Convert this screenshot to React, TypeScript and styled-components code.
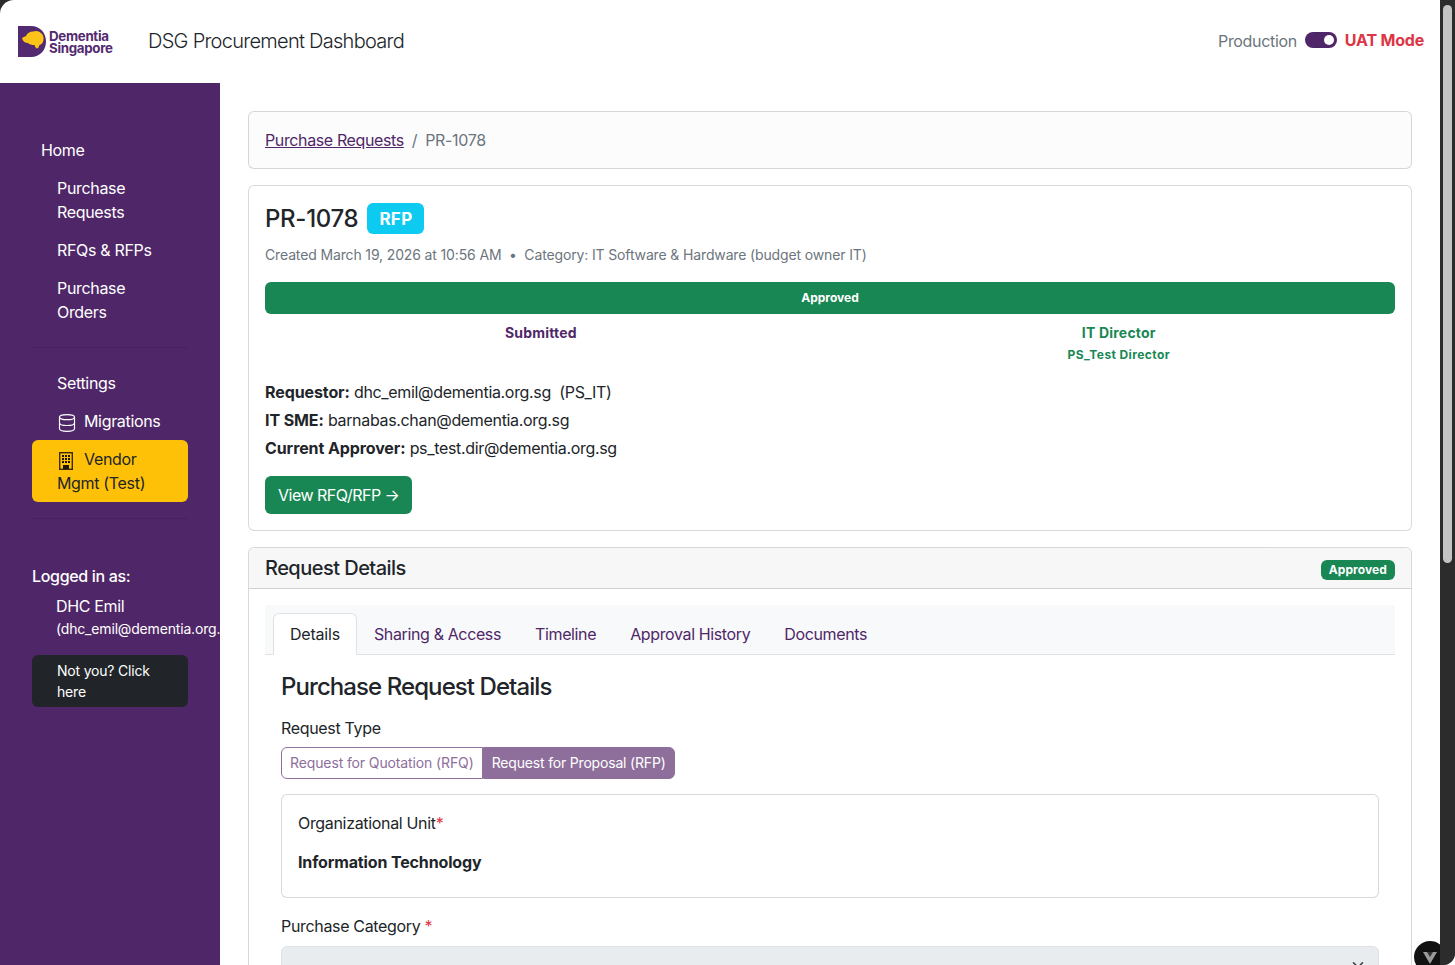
import { createGlobalStyle } from "styled-components";
import styled from "styled-components";
import { Database } from "lucide-react";

const GlobalStyle = createGlobalStyle`
  html, body {
    margin: 0;
    height: 100%;
    overflow: hidden;
    background: #fff;
  }
  * {
    box-sizing: border-box;
  }
  body {
    font-family: Inter, "Liberation Sans", sans-serif;
    font-size: 16px;
    line-height: 24px;
    letter-spacing: -0.33px;
    color: #212529;
  }
`;

const Window = styled.div`
  position: relative;
  width: 1455px;
  height: 965px;
  display: flex;
  background: #fff;
  overflow: hidden;
`;

const Page = styled.div`
  width: 1440px;
  height: 965px;
  display: flex;
  flex-direction: column;
  background: #fff;
  overflow: hidden;
  border-top-left-radius: 14px;
`;

const Corner = styled.div`
  width: 1455px;
  height: 965px;
  display: flex;
  background: #2b2b2b;
  border-bottom-right-radius: 12px;
`;

const Track = styled.div`
  width: 15px;
  height: 965px;
  padding: 5px 3px 0 3px;
  background: #2c2c2c;
  border-bottom-right-radius: 12px;
`;

const Thumb = styled.div`
  width: 9px;
  height: 558px;
  border-radius: 5px;
  background: #c4c4c4;
`;

const Header = styled.header`
  height: 83px;
  flex: none;
  display: flex;
  align-items: center;
  padding: 0 16px 0 18px;
`;

const Logo = styled.div`
  display: flex;
  align-items: center;
  gap: 3px;
  width: 130px;
`;

const LogoText = styled.div`
  color: #53296f;
  font-size: 13.3px;
  line-height: 12px;
  font-weight: 700;
  letter-spacing: -0.3px;
  margin-top: 1px;
`;

const Title = styled.div`
  font-size: 20px;
  font-weight: 300;
  letter-spacing: -0.72px;
  flex: 1;
  margin-top: -1px;
`;

const ModeSwitch = styled.div`
  display: flex;
  align-items: center;
  gap: 8px;
  margin-top: -2px;
`;

const ModeLabel = styled.span`
  color: #6c757d;
`;

const UatLabel = styled.span`
  color: #dc3545;
  font-weight: 700;
  letter-spacing: -0.2px;
  margin-top: -1px;
`;

const Toggle = styled.div`
  width: 32px;
  height: 16px;
  margin-top: -1px;
  border-radius: 8px;
  background: #4f2768;
  display: flex;
  justify-content: flex-end;
  align-items: center;
  padding-right: 3px;
`;

const Knob = styled.div`
  width: 10px;
  height: 10px;
  border-radius: 50%;
  background: #fff;
`;

const Body = styled.div`
  flex: 1;
  display: flex;
  min-height: 0;
`;

const Sidebar = styled.aside`
  width: 220px;
  flex: none;
  background: #4f2768;
  color: #fff;
  padding: 48px 0 0 32px;
  overflow: hidden;
`;

const NavList = styled.div`
  width: 156px;
`;

const NavItem = styled.div<{ $top?: boolean }>`
  padding: 7px 25px;
  padding-left: ${({ $top }) => ($top ? "9px" : "25px")};
`;

const ActiveNavItem = styled(NavItem)`
  background: #ffc107;
  color: #212529;
  border-radius: 6px;
`;

const NavIcon = styled.span`
  display: inline-flex;
  width: 20px;
  height: 17px;
  align-items: center;
  justify-content: center;
  vertical-align: middle;
  margin-right: 7px;

  svg {
    flex: none;
  }
`;

const BuildingIcon = styled(NavIcon)`
  width: 18px;
  margin-right: 9px;
`;

const NavDivider = styled.hr`
  border: 0;
  border-top: 1px solid rgba(0, 0, 0, 0.1);
  margin: 16px 0;
`;

const LoggedLabel = styled.div`
  margin-top: 45px;
  font-weight: 500;
`;

const UserName = styled.div`
  margin: 6px 0 0 24px;
`;

const UserEmail = styled.div`
  margin: 0 0 0 24px;
  font-size: 14px;
  letter-spacing: -0.17px;
  white-space: nowrap;
  line-height: 22px;
`;

const NotYou = styled.div`
  width: 156px;
  margin-top: 15px;
  padding: 5px 25px;
  background: #212529;
  border-radius: 6px;
  font-size: 14px;
  letter-spacing: -0.2px;
  line-height: 21px;
`;

const Main = styled.main`
  flex: 1;
  padding: 28px 28px 0 28px;
  display: flex;
  flex-direction: column;
  gap: 16px;
  overflow: hidden;
`;

const Card = styled.section`
  flex: none;
  border: 1px solid rgba(0, 0, 0, 0.15);
  border-radius: 6px;
  background: #fff;
`;

const Breadcrumb = styled(Card)`
  height: 58px;
  padding: 16px;
  display: flex;
  gap: 8px;
  background: #fcfcfc;
  color: #6c757d;
`;

const CrumbLink = styled.a`
  color: #4f2768;
  letter-spacing: -0.38px;
  text-decoration: underline;
`;

const SummaryCard = styled(Card)`
  height: 346px;
  padding: 16px;
`;

const TitleRow = styled.div`
  display: flex;
  align-items: center;
  gap: 9px;
  height: 33px;
`;

const PrNumber = styled.h1`
  margin: 0;
  font-size: 24px;
  line-height: 30px;
  font-weight: 500;
  letter-spacing: -0.3px;
`;

const TypeBadge = styled.span`
  width: 57px;
  height: 31px;
  background: #0dcaf0;
  color: #fff;
  border-radius: 6px;
  font-weight: 700;
  font-size: 17px;
  letter-spacing: 0.3px;
  display: flex;
  align-items: center;
  justify-content: center;
`;

const Meta = styled.div`
  margin-top: 8px;
  font-size: 14px;
  letter-spacing: -0.14px;
  line-height: 24px;
  color: #6c757d;
`;

const ProgressBar = styled.div`
  margin-top: 15px;
  height: 32px;
  background: #198754;
  border-radius: 6px;
  color: #fff;
  font-size: 12px;
  font-weight: 700;
  letter-spacing: 0;
  line-height: 32px;
  text-align: center;
`;

const Steps = styled.div`
  display: flex;
  justify-content: space-between;
  padding: 8px 225px 0 240px;
`;

const Step = styled.div<{ $done?: boolean }>`
  text-align: center;
  font-size: 14px;
  letter-spacing: 0.2px;
  line-height: 22px;
  font-weight: 700;
  color: ${({ $done }) => ($done ? "#198754" : "#4f2768")};
`;

const StepSub = styled.div`
  font-size: 12px;
  letter-spacing: 0.4px;
  line-height: 22px;
`;

const InfoList = styled.div`
  margin-top: 12px;
`;

const InfoLine = styled.div`
  line-height: 28px;

  b {
    letter-spacing: -0.1px;
  }
`;

const ViewButton = styled.div`
  display: inline-block;
  margin-top: 14px;
  padding: 7px 13px;
  height: 38px;
  border-radius: 6px;
  background: #198754;
  color: #fff;
  letter-spacing: -0.5px;
`;

const DetailsCard = styled(Card)`
  flex: 1;
  border-bottom: 0;
  border-radius: 6px 6px 0 0;
`;

const DetailsHeader = styled.div`
  height: 41px;
  display: flex;
  align-items: center;
  justify-content: space-between;
  padding: 0 16px;
  background: #f7f7f7;
  border-bottom: 1px solid rgba(0, 0, 0, 0.15);
  border-radius: 6px 6px 0 0;
`;

const DetailsTitle = styled.h2`
  margin: 0;
  font-size: 20px;
  font-weight: 500;
  letter-spacing: -0.53px;
`;

const StatusBadge = styled.span`
  background: #198754;
  color: #fff;
  font-size: 12px;
  font-weight: 700;
  line-height: 12px;
  padding: 4px 8px;
  margin-top: 3px;
  border-radius: 6px;
  letter-spacing: 0.1px;
`;

const DetailsBody = styled.div`
  padding: 16px;
`;

const Tabs = styled.div`
  height: 50px;
  padding: 8px 8px 0;
  display: flex;
  background: #f8f9fa;
  border-bottom: 1px solid #dee2e6;
`;

const Tab = styled.div<{ $active?: boolean }>`
  height: 42px;
  padding: 8px 16px;
  border: 1px solid ${({ $active }) => ($active ? "#dee2e6" : "transparent")};
  border-bottom-color: ${({ $active }) => ($active ? "#fff" : "transparent")};
  border-radius: 6px 6px 0 0;
  background: ${({ $active }) => ($active ? "#fff" : "transparent")};
  color: ${({ $active }) => ($active ? "#212529" : "#4f2768")};
  letter-spacing: ${({ $active }) => ($active ? "-0.2px" : "-0.37px")};
`;

const TabPane = styled.div`
  padding: 17px 16px 0;
`;

const PaneTitle = styled.h3`
  margin: 0;
  font-size: 24px;
  letter-spacing: -0.92px;
  line-height: 30px;
  font-weight: 500;
`;

const FieldLabel = styled.div`
  margin-top: 14px;
  line-height: 24px;
`;

const ButtonGroup = styled.div`
  display: inline-flex;
  margin-top: 7px;
  font-size: 14px;
  line-height: 21px;
`;

const GroupButton = styled.div<{ $on?: boolean }>`
  height: 32px;
  padding: 4px 8px;
  border: 1px solid #8e6f9b;
  border-radius: ${({ $on }) => ($on ? "0 6px 6px 0" : "6px 0 0 6px")};
  background: ${({ $on }) => ($on ? "#8e6f9b" : "#fff")};
  color: ${({ $on }) => ($on ? "#fff" : "#8e6f9b")};
  letter-spacing: ${({ $on }) => ($on ? "-0.18px" : "-0.12px")};
`;

const UnitCard = styled(Card)`
  height: 104px;
  margin-top: 15px;
  padding: 16px;
`;

const UnitValue = styled.div`
  margin-top: 15px;
  font-weight: 700;
  letter-spacing: -0.14px;
`;

const Required = styled.span`
  color: #dc3545;
`;

const CategoryLabel = styled.div`
  margin-top: 16px;
`;

const SelectBox = styled.div`
  margin-top: 8px;
  height: 38px;
  border: 1px solid #dee2e6;
  border-radius: 6px;
  background: #e9ecef;
  display: flex;
  justify-content: flex-end;
  padding: 12px 14px 0 0;
`;

const HelpBubble = styled.div`
  position: absolute;
  left: 1414px;
  top: 941px;
  width: 26px;
  height: 24px;
  overflow: hidden;
`;

export default function App() {
  return (
    <>
      <GlobalStyle />
      <Window>
        <Corner>
          <Page>
            <Header>
              <Logo>
                <svg width="28" height="31" viewBox="0 0 28 31">
                  <path d="M0 0h13c9 0 15 7 15 15.500S22 31 13 31H0z" fill="#53296f" />
                  <path
                    d="M4 12.500c1-1.500 2.500-2 4-2.500 1-3 4-4.500 7-4.500 3-1.200 6-.5 8 1.500 2 1.500 3 4 2.500 6.500 0 2.500-1.500 5-4 5.500-.5 1.500-1 3-2.500 3.500-1.500-.5-2-2-2.500-3.500-3 0-5-.5-6.500-2-2.500 0-5-1.500-6-4.500z"
                    fill="#fcc419"
                  />
                </svg>
                <LogoText>
                  Dementia
                  <br />
                  Singapore
                </LogoText>
              </Logo>
              <Title>DSG Procurement Dashboard</Title>
              <ModeSwitch>
                <ModeLabel>Production</ModeLabel>
                <Toggle>
                  <Knob />
                </Toggle>
                <UatLabel>UAT Mode</UatLabel>
              </ModeSwitch>
            </Header>
            <Body>
              <Sidebar>
                <NavList>
                  <NavItem $top>Home</NavItem>
                  <NavItem>Purchase Requests</NavItem>
                  <NavItem>RFQs &amp; RFPs</NavItem>
                  <NavItem>Purchase Orders</NavItem>
                  <NavDivider />
                  <NavItem>Settings</NavItem>
                  <NavItem>
                    <NavIcon>
                      <Database size={20} strokeWidth={1.4} />
                    </NavIcon>
                    Migrations
                  </NavItem>
                  <ActiveNavItem>
                    <BuildingIcon>
                      <svg width="14" height="18" viewBox="0 0 14 18">
                        <rect x="0.7" y="0.7" width="12.600" height="16.600" fill="none" stroke="#3a2a05" strokeWidth="1.400" />
                        <path
                          d="M3 3h2v2H3zM6 3h2v2H6zM9 3h2v2H9zM3 6h2v2H3zM6 6h2v2H6zM9 6h2v2H9zM3 9h2v2H3zM6 9h2v2H6zM9 9h2v2H9zM4 13h6v4H4z"
                          fill="#1c1603"
                        />
                      </svg>
                    </BuildingIcon>
                    Vendor Mgmt (Test)
                  </ActiveNavItem>
                  <NavDivider />
                </NavList>
                <LoggedLabel>Logged in as:</LoggedLabel>
                <UserName>DHC Emil</UserName>
                <UserEmail>(dhc_emil@dementia.org.sg)</UserEmail>
                <NotYou>Not you? Click here</NotYou>
              </Sidebar>
              <Main>
                <Breadcrumb>
                  <CrumbLink>Purchase Requests</CrumbLink>
                  <span>/</span>
                  <span>PR-1078</span>
                </Breadcrumb>
                <SummaryCard>
                  <TitleRow>
                    <PrNumber>PR-1078</PrNumber>
                    <TypeBadge>RFP</TypeBadge>
                  </TitleRow>
                  <Meta>
                    Created March 19, 2026 at 10:56 AM &nbsp;•&nbsp; Category: IT Software &amp; Hardware (budget owner IT)
                  </Meta>
                  <ProgressBar>Approved</ProgressBar>
                  <Steps>
                    <Step>Submitted</Step>
                    <Step $done>
                      IT Director
                      <StepSub>PS_Test Director</StepSub>
                    </Step>
                  </Steps>
                  <InfoList>
                    <InfoLine>
                      <b>Requestor:</b> dhc_emil@dementia.org.sg &nbsp;(PS_IT)
                    </InfoLine>
                    <InfoLine>
                      <b>IT SME:</b> barnabas.chan@dementia.org.sg
                    </InfoLine>
                    <InfoLine>
                      <b>Current Approver:</b> ps_test.dir@dementia.org.sg
                    </InfoLine>
                  </InfoList>
                  <ViewButton>View RFQ/RFP →</ViewButton>
                </SummaryCard>
                <DetailsCard>
                  <DetailsHeader>
                    <DetailsTitle>Request Details</DetailsTitle>
                    <StatusBadge>Approved</StatusBadge>
                  </DetailsHeader>
                  <DetailsBody>
                    <Tabs>
                      <Tab $active>Details</Tab>
                      <Tab>Sharing &amp; Access</Tab>
                      <Tab>Timeline</Tab>
                      <Tab>Approval History</Tab>
                      <Tab>Documents</Tab>
                    </Tabs>
                    <TabPane>
                      <PaneTitle>Purchase Request Details</PaneTitle>
                      <FieldLabel>Request Type</FieldLabel>
                      <ButtonGroup>
                        <GroupButton>Request for Quotation (RFQ)</GroupButton>
                        <GroupButton $on>Request for Proposal (RFP)</GroupButton>
                      </ButtonGroup>
                      <UnitCard>
                        <div>
                          Organizational Unit<Required>*</Required>
                        </div>
                        <UnitValue>Information Technology</UnitValue>
                      </UnitCard>
                      <CategoryLabel>
                        Purchase Category <Required>*</Required>
                      </CategoryLabel>
                      <SelectBox>
                        <svg width="12" height="12" viewBox="0 0 16 16" fill="none" stroke="#343a40" strokeWidth="2" strokeLinecap="round" strokeLinejoin="round">
                          <path d="m2 5 6 6 6-6" />
                        </svg>
                      </SelectBox>
                    </TabPane>
                  </DetailsBody>
                </DetailsCard>
              </Main>
            </Body>
          </Page>
          <Track>
            <Thumb />
          </Track>
        </Corner>
        <HelpBubble>
          <svg width="32" height="32" viewBox="0 0 32 32">
            <circle cx="16" cy="16" r="16" fill="#111" />
            <path d="M9 11h14l-7 12z" fill="#9a9a9a" />
            <path d="M13 11h6l-3 5z" fill="#333" />
          </svg>
        </HelpBubble>
      </Window>
    </>
  );
}
